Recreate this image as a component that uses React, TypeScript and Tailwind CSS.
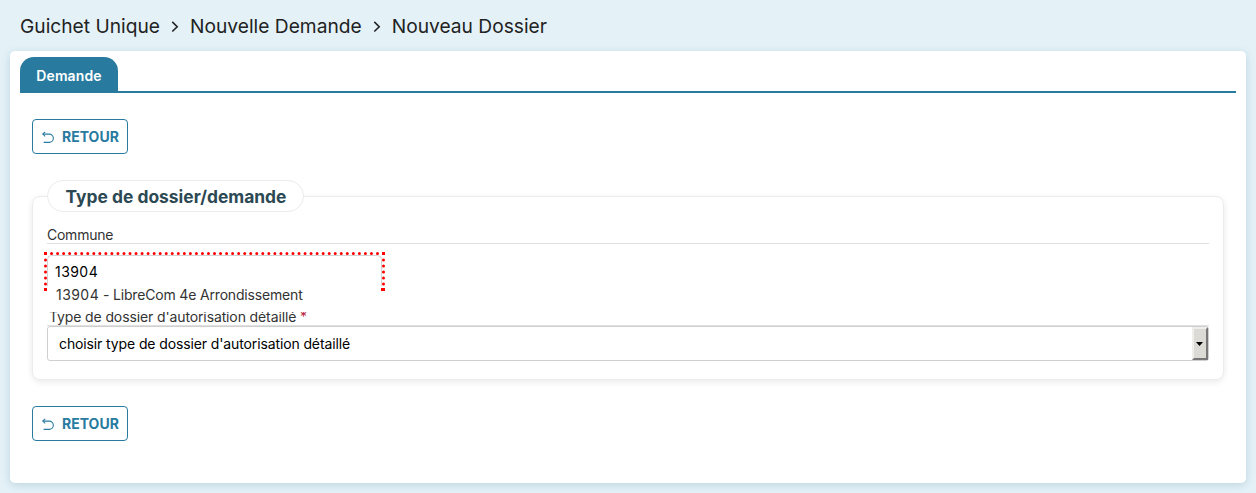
import React from "react";

function BackIcon() {
  return (
    <svg
      viewBox="0 0 14 14"
      className="h-[14px] w-[14px] shrink-0"
      fill="none"
      stroke="currentColor"
      strokeWidth="1.1"
    >
      <path d="M4.2 0.9 L1.8 3.1 L4.2 5.3" />
      <path d="M1.9 3.1 H8.2 A4.1 4.1 0 0 1 8.2 11.4 H2.6" />
    </svg>
  );
}

function BackButton() {
  return (
    <button className="flex h-[35px] w-24 items-center rounded-[4px] border border-[#287b9f] bg-white pl-[8px] text-[14px] font-bold text-[#287b9f]">
      <span className="mt-[3px]">
        <BackIcon />
      </span>
      <span className="ml-[7px]">RETOUR</span>
    </button>
  );
}

function Chevron() {
  return (
    <svg
      viewBox="0 0 30 24"
      className="h-6 w-[30px]"
      fill="none"
      stroke="currentColor"
      strokeWidth="1.6"
    >
      <path d="M12.3 7.9 L17.2 12.7 L12.3 17.5" />
    </svg>
  );
}

function DottedFrame() {
  return (
    <svg viewBox="0 0 341 39" className="h-[39px] w-[341px]" fill="none">
      <path d="M3.5 39 V7.5 A4 4 0 0 1 7.5 3.5 H333.5 A4 4 0 0 1 337.5 7.5 V32 Q337.5 35.5 334 35.5" stroke="#d2d2d2" />
      <g stroke="#ff0000" strokeWidth="3" strokeLinecap="round">
        <path d="M7.54 1.5 H334" strokeDasharray="0 6.036" />
        <path d="M1.5 8 V33" strokeDasharray="0 6" />
        <path d="M339.5 8 V33" strokeDasharray="0 6" />
      </g>
      <g fill="#ff0000">
        <rect width="3" height="3" />
        <rect x="338" width="3" height="3" />
        <rect y="36" width="3" height="3" />
        <rect x="337" y="36" width="4" height="3" />
      </g>
    </svg>
  );
}

export default function App() {
  return (
    <div className="flex h-[493px] w-full flex-col bg-[#e4f2f8] px-[10px] pb-[10px] font-['Inter',sans-serif] text-[14px] leading-[18px] text-[#333]">
      <header className="flex h-[51px] shrink-0 items-center pl-[10px] pt-px text-[19.2px] leading-6 text-[#222]">
        <span>Guichet Unique</span>
        <Chevron />
        <span>Nouvelle Demande</span>
        <Chevron />
        <span>Nouveau Dossier</span>
      </header>
      <main className="flex-1 rounded-[5px] bg-white px-[10px] pt-[6px] shadow-[0_2px_8px_rgba(40,90,115,0.2)]">
        <nav className="flex h-9 border-b-2 border-[#287b9f]">
          <div className="flex h-[34px] w-[98px] items-center justify-center rounded-t-[14px] bg-[#287b9f] pt-[3px] text-[14px] font-semibold tracking-[0.1px] text-white">
            Demande
          </div>
        </nav>
        <div className="px-3 pt-[26px]">
          <BackButton />
          <section className="mt-[42px] h-[184px] rounded-[8px] border border-[#ececec] px-[14px] shadow-[0_2px_6px_rgba(0,0,0,0.09)]">
            <h2 className="-mt-[17px] flex h-8 w-[257px] items-center justify-center rounded-full border border-[#ececec] bg-white pl-px pt-[2px] text-[17.4px] font-bold text-[#2c4853]">
              Type de dossier/demande
            </h2>
            <div className="mt-[14px] h-[18px] border-b border-[#e0e0e0]">
              <label className="tracking-[-0.25px]">Commune</label>
            </div>
            <div className="relative mt-[8px] h-[39px] pl-[8px] pt-[11px] text-black">
              <div className="absolute -left-[3px] top-0">
                <DottedFrame />
              </div>
              <span className="tracking-[0.45px]">13904</span>
              <div className="absolute left-0 top-[34px] z-10 h-[26px] w-[334px] bg-white pl-[9px] tracking-[-0.17px] text-[#333]">
                <span className="tracking-[0.45px]">13904</span> - LibreCom 4e Arrondissement
              </div>
            </div>
            <div className="mt-[17px] h-[18px] border-b border-[#e0e0e0] pl-[2px]">
              <label className="tracking-[-0.12px]">
                Type de dossier d'autorisation détaillé{" "}
                <span className="text-[#b5233a]">*</span>
              </label>
            </div>
            <div className="flex h-[35px] items-center rounded-[3px] border border-[#cfcfcf] bg-white pl-[11px] text-black">
              <span className="flex-1 tracking-[-0.12px]">
                choisir type de dossier d'autorisation détaillé
              </span>
              <span className="flex h-[33px] w-4 items-center justify-center border-2 border-b-[#777] border-l-[#eeeeea] border-r-[#777] border-t-[#eeeeea] bg-[#dcdad5]">
                <svg viewBox="0 0 7 4" className="h-1 w-[7px] shrink-0 -translate-x-px" fill="black">
                  <path d="M0 0H7L3.5 4Z" />
                </svg>
              </span>
            </div>
          </section>
          <div className="mt-[26px]">
            <BackButton />
          </div>
        </div>
      </main>
    </div>
  );
}
